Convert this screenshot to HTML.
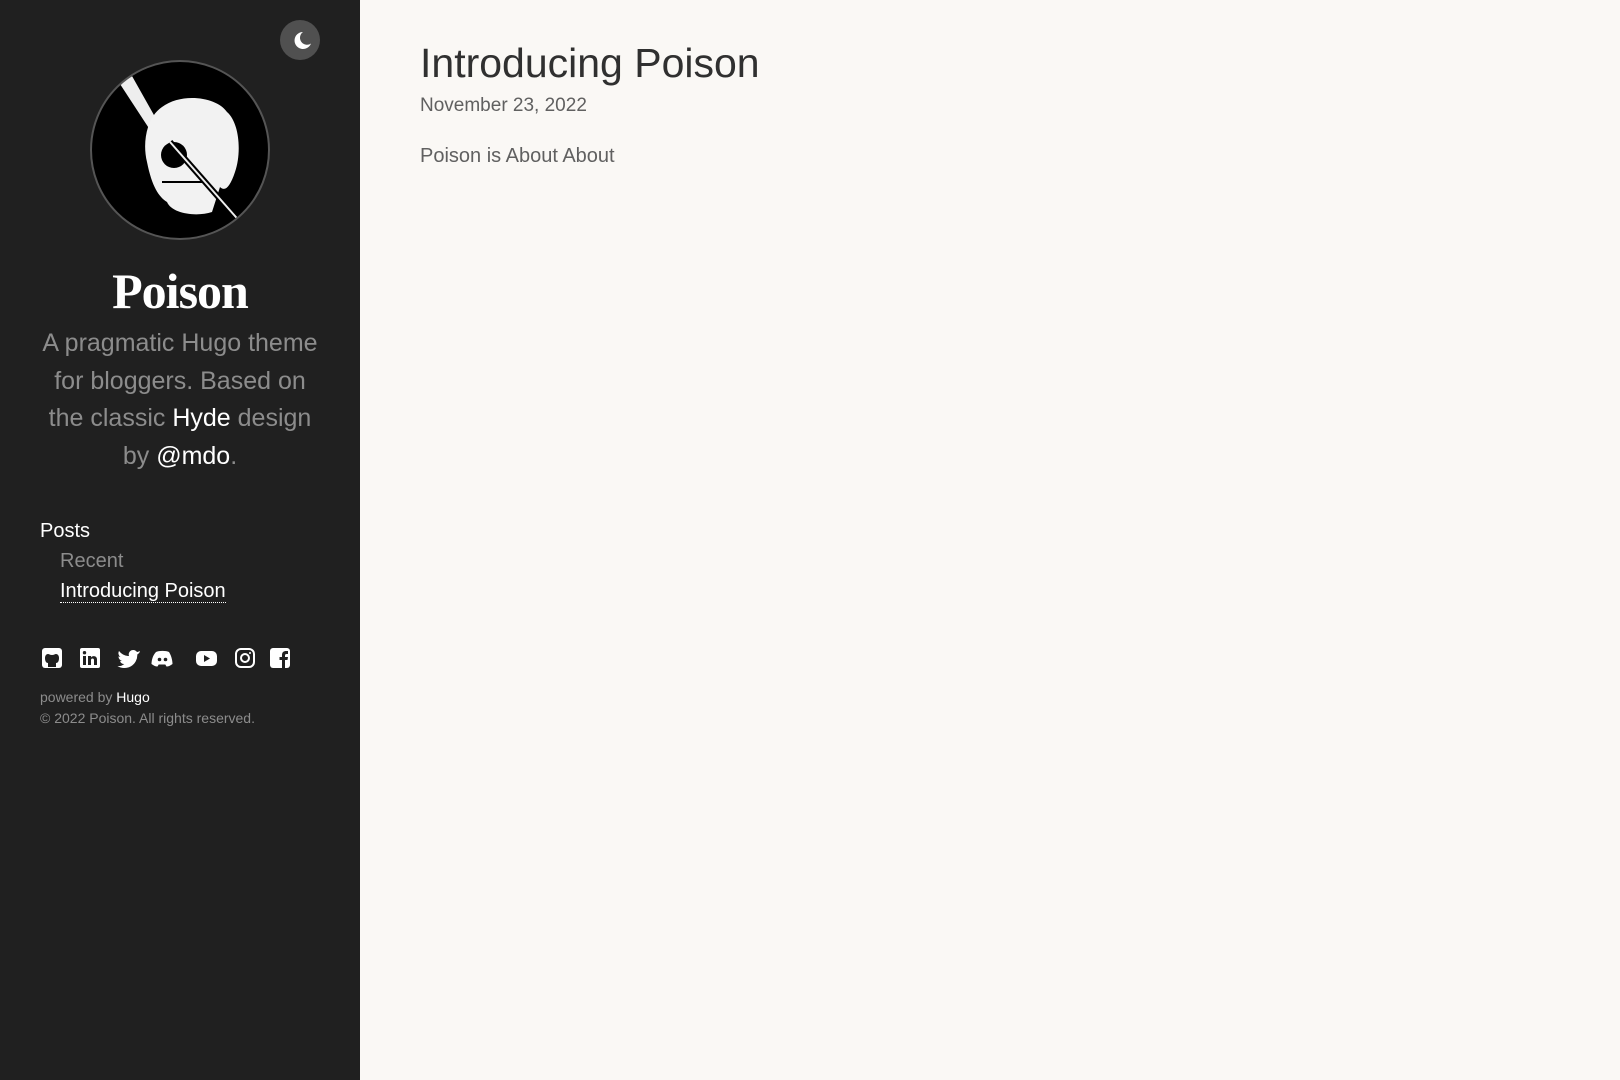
<!DOCTYPE html>
<html><head><meta charset="utf-8"><style>
*{margin:0;padding:0;box-sizing:border-box}
body{width:1620px;height:1080px;background:#faf8f5;font-family:"Liberation Sans",sans-serif;position:relative;overflow:hidden}
.sb{position:absolute;left:0;top:0;width:360px;height:1080px;background:#202020}
.moon{position:absolute;left:280px;top:20px;width:40px;height:40px;border-radius:50%;background:#505050}
.av{position:absolute;left:90px;top:60px;width:180px;height:180px;border-radius:50%;background:#000;border:2px solid #555;overflow:hidden}
.t{position:absolute;left:0;width:360px;text-align:center}
a{color:#fff;text-decoration:none}
.abs{position:absolute;white-space:nowrap}
</style></head><body>
<div class="sb">
<div class="moon"><svg width="40" height="40" viewBox="0 0 40 40"><path d="M23 12a8.5 8.5 0 1 0 8 11.5a7 7 0 0 1-8-11.5z" fill="#fff"/></svg></div>
<div class="av"><svg width="180" height="180" viewBox="0 0 180 180">
<path d="M28 22l12-8 45 80-6 6z" fill="#eee"/>
<path d="M70 45c20-15 55-10 65 5 12 10 15 40 8 60 -5 15-10 20-15 15l-8 25c-15 5-40 2-45-10-8-5-15-15-20-40-5-20 0-45 15-55z" fill="#f2f2f2"/>
<circle cx="82" cy="93" r="13" fill="#000"/>
<path d="M70 120h45" stroke="#000" stroke-width="2"/>
<path d="M78 80l72 82" stroke="#000" stroke-width="6"/>
<path d="M78 80l72 82" stroke="#eee" stroke-width="2"/>
</svg></div>
<div class="t" style="top:262px;font-family:'Liberation Serif',serif;font-weight:bold;font-size:50px;color:#fff;letter-spacing:-1px">Poison</div>
<div class="t" style="top:325px;font-size:25px;line-height:37.7px;color:#8c8c8c;padding:0 36px">A pragmatic Hugo theme for bloggers. Based on the classic <a>Hyde</a> design by <a>@mdo</a>.</div>
<div class="abs" style="left:40px;top:520px;font-size:20px;color:#fff">Posts</div>
<div class="abs" style="left:60px;top:550px;font-size:20px;color:#8c8c8c">Recent</div>
<div class="abs" style="left:60px;top:580px;font-size:20px;color:#fff;border-bottom:1px dotted #fff;line-height:22px">Introducing Poison</div>
<svg class="abs" style="left:40px;top:647px" width="260" height="22" viewBox="0 0 260 22" fill="#fff">
<rect x="2" y="1" width="20" height="20" rx="3"/><path d="M8 20v-4c-2 0-3-2-3-5 0-2 1-4 3-4 1 0 2 1 4 1s3-1 4-1c2 0 3 2 3 4 0 3-1 5-3 5v4z" fill="#202020"/>
<rect x="40" y="1" width="20" height="20" rx="2"/><path d="M43 9h3v9h-3zM44.5 4a1.7 1.7 0 1 1 0 3.4a1.7 1.7 0 0 1 0-3.4zM48 9h3v1.5c1-2 6-2 6 2V18h-3v-5c0-2-3-2-3 0v5h-3z" fill="#202020"/>
<path d="M100 4c-1 .6-2 .9-3 1a4.5 4.5 0 0 0-8 4 13 13 0 0 1-10-5 4.5 4.5 0 0 0 1.5 6 4.5 4.5 0 0 1-2-.6 4.5 4.5 0 0 0 3.5 4.5 4.5 4.5 0 0 1-2 .1 4.5 4.5 0 0 0 4.3 3 9 9 0 0 1-7 2 13 13 0 0 0 20-11.5c1-.7 1.7-1.5 2.3-2.3z"/>
<path d="M116 5c3-1.5 10-1.5 13 0 2 3 3.5 8 3.5 12-2 1.5-4 2.5-6 2.5l-1.2-2h-6.6l-1.2 2c-2 0-4-1-6-2.5 0-4 1.5-9 4.5-12z"/><circle cx="119.5" cy="12.5" r="1.8" fill="#202020"/><circle cx="125.5" cy="12.5" r="1.8" fill="#202020"/>
<rect x="156" y="4" width="21" height="15" rx="5"/><path d="M164 8v7l6-3.5z" fill="#202020"/>
<rect x="196" y="2" width="18" height="18" rx="5" fill="none" stroke="#fff" stroke-width="2"/><circle cx="205" cy="11" r="4" fill="none" stroke="#fff" stroke-width="2"/><circle cx="210" cy="6" r="1"/>
<rect x="230" y="1" width="20" height="20" rx="3"/><path d="M242 21v-8h-2.5v-3h2.5V8c0-3 2-4 4-4h2v3h-1.5c-1 0-1.5.5-1.5 1.5V10h3l-.5 3h-2.5v8z" fill="#202020"/>
</svg>
<div class="abs" style="left:40px;top:689px;font-size:14px;color:#8c8c8c">powered by <a>Hugo</a></div>
<div class="abs" style="left:40px;top:710px;font-size:14px;color:#8c8c8c">© 2022 Poison. All rights reserved.</div>
</div>
<div class="abs" style="left:420px;top:40px;font-size:41px;color:#303030">Introducing Poison</div>
<div class="abs" style="left:420px;top:95px;font-size:19px;color:#606060">November 23, 2022</div>
<div class="abs" style="left:420px;top:145px;font-size:20px;color:#606060">Poison is About About</div>
</body></html>
